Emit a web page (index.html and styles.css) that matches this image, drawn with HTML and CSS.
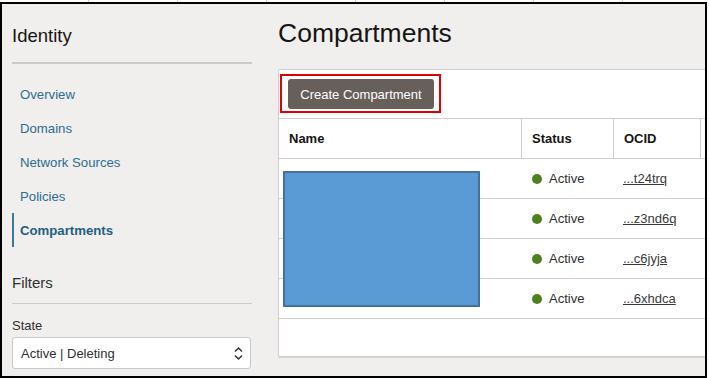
FILE: index.html
```html
<!DOCTYPE html>
<html lang="en">
<head>
  <meta charset="UTF-8" />
  <meta name="viewport" content="width=device-width, initial-scale=1.0"/>
  <title>Compartments - Identity</title>
  <link rel="stylesheet" href="styles.css">
</head>
<body>

  <div class="ruler"></div>
  <div class="frame">

    <aside class="sidebar">
      <h2 class="side-title">Identity</h2>
      <ul class="side-nav">
        <li><a href="#">Overview</a></li>
        <li><a href="#">Domains</a></li>
        <li><a href="#">Network Sources</a></li>
        <li><a href="#">Policies</a></li>
        <li><a href="#" class="active">Compartments</a></li>
      </ul>

      <h3 class="filters-title">Filters</h3>
      <label class="field-label" for="state">State</label>
      <div class="select">
        <span id="state">Active | Deleting</span>
        <svg class="select-arrows" width="9" height="15" viewBox="0 0 9 15">
          <path d="M1 5.5 L4.5 2 L8 5.5" fill="none" stroke="#333" stroke-width="1.5"/>
          <path d="M1 9.5 L4.5 13 L8 9.5" fill="none" stroke="#333" stroke-width="1.5"/>
        </svg>
      </div>
    </aside>

    <main class="content">
      <h1 class="page-title">Compartments</h1>

      <div class="panel">
        <div class="toolbar">
          <button class="btn-primary">Create Compartment</button>
          <span class="callout"></span>
        </div>

        <div class="grid-head">
          <div class="cell">Name</div>
          <div class="cell">Status</div>
          <div class="cell">OCID</div>
          <div class="cell"></div>
        </div>

        <div class="grid-body">
          <div class="grid-row">
            <div class="cell"></div>
            <div class="cell"><span class="dot"></span>Active</div>
            <div class="cell"><a href="#">...t24trq</a></div>
          </div>
          <div class="grid-row">
            <div class="cell"></div>
            <div class="cell"><span class="dot"></span>Active</div>
            <div class="cell"><a href="#">...z3nd6q</a></div>
          </div>
          <div class="grid-row">
            <div class="cell"></div>
            <div class="cell"><span class="dot"></span>Active</div>
            <div class="cell"><a href="#">...c6jyja</a></div>
          </div>
          <div class="grid-row">
            <div class="cell"></div>
            <div class="cell"><span class="dot"></span>Active</div>
            <div class="cell"><a href="#">...6xhdca</a></div>
          </div>

          <!-- names are hidden under this box -->
          <div class="redact"></div>
        </div>
      </div>
    </main>

  </div>

</body>
</html>
```

FILE: styles.css
```css
* {
  box-sizing: border-box;
}

body {
  margin: 0;
  width: 709px;
  height: 378px;
  overflow: hidden;
  background: #fff;
  font-family: "Liberation Sans", Arial, sans-serif;
  color: #2f2f2f;
}

.ruler {
  height: 2px;
  background: repeating-linear-gradient(to right, transparent 0, transparent 88px, #cfcfcf 88px, #cfcfcf 89px);
}

.frame {
  width: 707px;
  height: 376px;
  border: 2px solid #000;
  background: #f0efed;
  display: flex;
  overflow: hidden;
}

/* sidebar */
.sidebar {
  width: 250px;
  flex-shrink: 0;
  padding: 20px 0 0 10px;
}

.side-title {
  margin: 0;
  font-size: 18.5px;
  font-weight: normal;
  line-height: 24px;
  color: #161513;
  padding-bottom: 14px;
  border-bottom: 2px solid #cbcac8;
}

.side-nav {
  list-style: none;
  margin: 13px 0 0;
  padding: 0;
}

.side-nav a {
  display: block;
  height: 34px;
  line-height: 35px;
  padding-left: 8px;
  font-size: 13.2px;
  color: #2c6d8e;
  text-decoration: none;
}

.side-nav a.active {
  border-left: 2px solid #3d7a98;
  padding-left: 6px;
  font-weight: bold;
  color: #245f7e;
}

.filters-title {
  margin: 26px 0 0;
  font-size: 15px;
  font-weight: normal;
  line-height: 20px;
  color: #2f2f2f;
  padding-bottom: 10px;
  border-bottom: 1px solid #cbcac8;
}

.field-label {
  display: block;
  margin-top: 14px;
  font-size: 13px;
  line-height: 16px;
  color: #2f2f2f;
}

.select {
  margin-top: 3px;
  width: 239px;
  height: 32px;
  background: #fff;
  border: 1px solid #c9c9c9;
  border-radius: 3px;
  display: flex;
  align-items: center;
  justify-content: space-between;
  padding: 0 7px 0 8px;
  font-size: 13px;
  color: #2f2f2f;
}

/* main */
.content {
  flex: 1;
  min-width: 0;
  margin-left: 26px;
  padding-top: 14px;
}

.page-title {
  margin: 0 0 21px;
  font-size: 26.5px;
  font-weight: normal;
  line-height: 30px;
  color: #161513;
}

.panel {
  width: 460px;
  height: 288px;
  background: #fff;
  border: 1px solid #d2d1cf;
  border-radius: 2px;
  box-shadow: 0 1px 1px rgba(0,0,0,0.12);
}

.toolbar {
  position: relative;
  padding: 9px;
  height: 48px;
}

.btn-primary {
  height: 30px;
  width: 146px;
  border: none;
  border-radius: 3px;
  background: #665f5a;
  color: #fff;
  font-family: inherit;
  font-size: 13px;
  padding: 0;
  cursor: pointer;
}

.callout {
  position: absolute;
  left: 1px;
  top: 4px;
  width: 161px;
  height: 39px;
  border: 2px solid #e30000;
}

.grid-head,
.grid-row {
  display: grid;
  grid-template-columns: 242px 92px 87px 1fr;
  font-size: 13px;
}

.grid-head {
  height: 41px;
  border-top: 1px solid #cfcecc;
  border-bottom: 1px solid #cfcecc;
  font-weight: bold;
  color: #161513;
}

.grid-head .cell + .cell {
  border-left: 1px solid #cfcecc;
}

.cell {
  display: flex;
  align-items: center;
  padding-left: 10px;
}

.grid-body {
  position: relative;
}

.grid-row {
  height: 40px;
  border-bottom: 1px solid #cfcecc;
  color: #2f2f2f;
}

.grid-row .cell:nth-child(2) {
  padding-left: 11px;
}

.grid-row a {
  color: #3a3a3a;
  text-decoration: underline;
}

.dot {
  width: 10px;
  height: 10px;
  border-radius: 50%;
  background: #4e7f20;
  margin-right: 7px;
}

.redact {
  position: absolute;
  left: 4px;
  top: 12px;
  width: 197px;
  height: 136px;
  background: #5b9bd5;
  border: 2px solid #41719c;
}
```
